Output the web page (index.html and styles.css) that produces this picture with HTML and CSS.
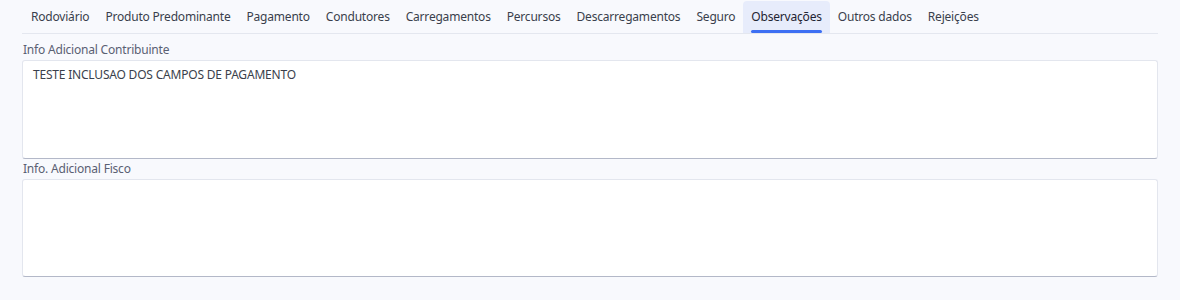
FILE: index.html
```html
<!DOCTYPE html>
<html lang="pt">
<head>
<meta charset="utf-8">
<link rel="stylesheet" href="styles.css">
</head>
<body>
<div class="page">
  <nav class="tabs">
    <div class="tab">Rodoviário</div>
    <div class="tab">Produto Predominante</div>
    <div class="tab">Pagamento</div>
    <div class="tab">Condutores</div>
    <div class="tab">Carregamentos</div>
    <div class="tab">Percursos</div>
    <div class="tab">Descarregamentos</div>
    <div class="tab">Seguro</div>
    <div class="tab active">Observações</div>
    <div class="tab">Outros dados</div>
    <div class="tab">Rejeições</div>
  </nav>
  <div class="field first">
    <label class="label">Info Adicional Contribuinte</label>
    <div class="textarea">TESTE INCLUSAO DOS CAMPOS DE PAGAMENTO</div>
  </div>
  <div class="field second">
    <label class="label">Info. Adicional Fisco</label>
    <div class="textarea"></div>
  </div>
</div>
</body>
</html>
```
FILE: styles.css
```css
html, body {
  margin: 0;
  padding: 0;
  background: #f8f9fd;
}
body {
  font-family: "Noto Sans", "Open Sans", sans-serif;
  font-size: 12px;
  letter-spacing: -0.2px;
  color: #3a3f4c;
}
.page {
  width: 1136px;
  margin-left: 22px;
  padding-top: 1px;
}
.tabs {
  display: flex;
  height: 32px;
  border-bottom: 1px solid #e4e7ef;
}
.tab {
  position: relative;
  padding: 0 8px;
  line-height: 32px;
  color: #3a3f4c;
  white-space: nowrap;
}
.tab:first-child {
  margin-left: 1px;
}
.tab.active {
  background: #e7ecfb;
  border-radius: 4px 4px 0 0;
  color: #1f2433;
}
.tab.active::after {
  content: "";
  position: absolute;
  left: 8px;
  right: 8px;
  bottom: 0;
  height: 3px;
  border-radius: 2px;
  background: #3d6ff3;
}
.field {
  display: flex;
  flex-direction: column;
}
.field.first {
  margin-top: 8px;
}
.field.second {
  margin-top: 2px;
}
.label {
  line-height: 16px;
  color: #5a6073;
  padding-left: 1px;
  margin-bottom: 2px;
}
.textarea {
  background: #fff;
  border: 1px solid #e3e6ee;
  border-bottom-color: #b3b8c8;
  border-radius: 3px;
  padding: 6px 10px;
  box-sizing: border-box;
  height: 99px;
  color: #3a3f4c;
  line-height: 16px;
}
.field.second .textarea {
  height: 98px;
}
```
